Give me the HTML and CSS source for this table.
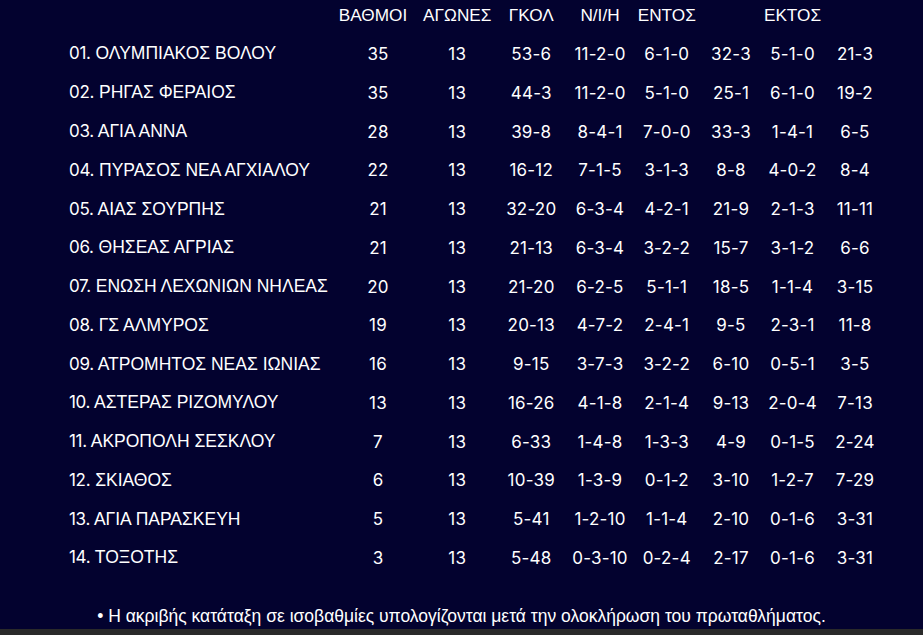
FILE: index.html
```html
<!DOCTYPE html>
<html lang="el">
<head>
<meta charset="utf-8">
<title>Βαθμολογία</title>
<link rel="stylesheet" href="styles.css">
</head>
<body>
<main class="page">
  <div class="standings">
    <div class="row head">
      <div class="name"></div>
      <div class="c hpts">ΒΑΘΜΟΙ</div>
      <div class="c">ΑΓΩΝΕΣ</div>
      <div class="c">ΓΚΟΛ</div>
      <div class="c">Ν/Ι/Η</div>
      <div class="c">ΕΝΤΟΣ</div>
      <div class="c"></div>
      <div class="c">ΕΚΤΟΣ</div>
      <div class="c"></div>
    </div>
    <div class="row"><div class="name"><span class="num">01.</span> ΟΛΥΜΠΙΑΚΟΣ ΒΟΛΟΥ</div><div class="c n">35</div><div class="c n">13</div><div class="c n">53-6</div><div class="c n">11-2-0</div><div class="c n">6-1-0</div><div class="c n">32-3</div><div class="c n">5-1-0</div><div class="c n">21-3</div></div>
    <div class="row"><div class="name"><span class="num">02.</span> ΡΗΓΑΣ ΦΕΡΑΙΟΣ</div><div class="c n">35</div><div class="c n">13</div><div class="c n">44-3</div><div class="c n">11-2-0</div><div class="c n">5-1-0</div><div class="c n">25-1</div><div class="c n">6-1-0</div><div class="c n">19-2</div></div>
    <div class="row"><div class="name"><span class="num">03.</span> ΑΓΙΑ ΑΝΝΑ</div><div class="c n">28</div><div class="c n">13</div><div class="c n">39-8</div><div class="c n">8-4-1</div><div class="c n">7-0-0</div><div class="c n">33-3</div><div class="c n">1-4-1</div><div class="c n">6-5</div></div>
    <div class="row"><div class="name"><span class="num">04.</span> ΠΥΡΑΣΟΣ ΝΕΑ ΑΓΧΙΑΛΟΥ</div><div class="c n">22</div><div class="c n">13</div><div class="c n">16-12</div><div class="c n">7-1-5</div><div class="c n">3-1-3</div><div class="c n">8-8</div><div class="c n">4-0-2</div><div class="c n">8-4</div></div>
    <div class="row"><div class="name"><span class="num">05.</span> ΑΙΑΣ ΣΟΥΡΠΗΣ</div><div class="c n">21</div><div class="c n">13</div><div class="c n">32-20</div><div class="c n">6-3-4</div><div class="c n">4-2-1</div><div class="c n">21-9</div><div class="c n">2-1-3</div><div class="c n">11-11</div></div>
    <div class="row"><div class="name"><span class="num">06.</span> ΘΗΣΕΑΣ ΑΓΡΙΑΣ</div><div class="c n">21</div><div class="c n">13</div><div class="c n">21-13</div><div class="c n">6-3-4</div><div class="c n">3-2-2</div><div class="c n">15-7</div><div class="c n">3-1-2</div><div class="c n">6-6</div></div>
    <div class="row"><div class="name"><span class="num">07.</span> ΕΝΩΣΗ ΛΕΧΩΝΙΩΝ ΝΗΛΕΑΣ</div><div class="c n">20</div><div class="c n">13</div><div class="c n">21-20</div><div class="c n">6-2-5</div><div class="c n">5-1-1</div><div class="c n">18-5</div><div class="c n">1-1-4</div><div class="c n">3-15</div></div>
    <div class="row"><div class="name"><span class="num">08.</span> ΓΣ ΑΛΜΥΡΟΣ</div><div class="c n">19</div><div class="c n">13</div><div class="c n">20-13</div><div class="c n">4-7-2</div><div class="c n">2-4-1</div><div class="c n">9-5</div><div class="c n">2-3-1</div><div class="c n">11-8</div></div>
    <div class="row"><div class="name"><span class="num">09.</span> ΑΤΡΟΜΗΤΟΣ ΝΕΑΣ ΙΩΝΙΑΣ</div><div class="c n">16</div><div class="c n">13</div><div class="c n">9-15</div><div class="c n">3-7-3</div><div class="c n">3-2-2</div><div class="c n">6-10</div><div class="c n">0-5-1</div><div class="c n">3-5</div></div>
    <div class="row"><div class="name"><span class="num">10.</span> ΑΣΤΕΡΑΣ ΡΙΖΟΜΥΛΟΥ</div><div class="c n">13</div><div class="c n">13</div><div class="c n">16-26</div><div class="c n">4-1-8</div><div class="c n">2-1-4</div><div class="c n">9-13</div><div class="c n">2-0-4</div><div class="c n">7-13</div></div>
    <div class="row"><div class="name"><span class="num">11.</span> ΑΚΡΟΠΟΛΗ ΣΕΣΚΛΟΥ</div><div class="c n">7</div><div class="c n">13</div><div class="c n">6-33</div><div class="c n">1-4-8</div><div class="c n">1-3-3</div><div class="c n">4-9</div><div class="c n">0-1-5</div><div class="c n">2-24</div></div>
    <div class="row"><div class="name"><span class="num">12.</span> ΣΚΙΑΘΟΣ</div><div class="c n">6</div><div class="c n">13</div><div class="c n">10-39</div><div class="c n">1-3-9</div><div class="c n">0-1-2</div><div class="c n">3-10</div><div class="c n">1-2-7</div><div class="c n">7-29</div></div>
    <div class="row"><div class="name"><span class="num">13.</span> ΑΓΙΑ ΠΑΡΑΣΚΕΥΗ</div><div class="c n">5</div><div class="c n">13</div><div class="c n">5-41</div><div class="c n">1-2-10</div><div class="c n">1-1-4</div><div class="c n">2-10</div><div class="c n">0-1-6</div><div class="c n">3-31</div></div>
    <div class="row"><div class="name"><span class="num">14.</span> ΤΟΞΟΤΗΣ</div><div class="c n">3</div><div class="c n">13</div><div class="c n">5-48</div><div class="c n">0-3-10</div><div class="c n">0-2-4</div><div class="c n">2-17</div><div class="c n">0-1-6</div><div class="c n">3-31</div></div>
  </div>
  <p class="note">• Η ακριβής κατάταξη σε ισοβαθμίες υπολογίζονται μετά την ολοκλήρωση του πρωταθλήματος.</p>
</main>
</body>
</html>
```

FILE: styles.css
```css
html {
  background: #2a2a2a;
}
body {
  margin: 0;
  font-family: "Liberation Sans", Arial, sans-serif;
  color: #ffffff;
}
.page {
  background: #03022f;
  height: 629px;
  overflow: hidden;
}
.standings {
  padding-left: 69px;
}
.row {
  display: grid;
  grid-template-columns: 268.5px 81px 77.5px 70.5px 67px 66.5px 62px 61px 64px;
  height: 38.77px;
  align-items: center;
  font-size: 17px;
}
.row.head {
  height: 31px;
  padding-bottom: 3.6px;
  font-size: 17.2px;
}
.hpts {
  padding-right: 10px;
}
.name {
  white-space: nowrap;
  font-size: 17.5px;
}
.num {
  font-family: "Inter", sans-serif;
  font-size: 17px;
  letter-spacing: -0.3px;
}
.c {
  text-align: center;
  white-space: nowrap;
}
.n {
  font-family: "Inter", sans-serif;
  letter-spacing: 0.2px;
}
.note {
  margin: 29px 0 0;
  text-align: center;
  font-size: 17.5px;
  line-height: 20px;
}
```
